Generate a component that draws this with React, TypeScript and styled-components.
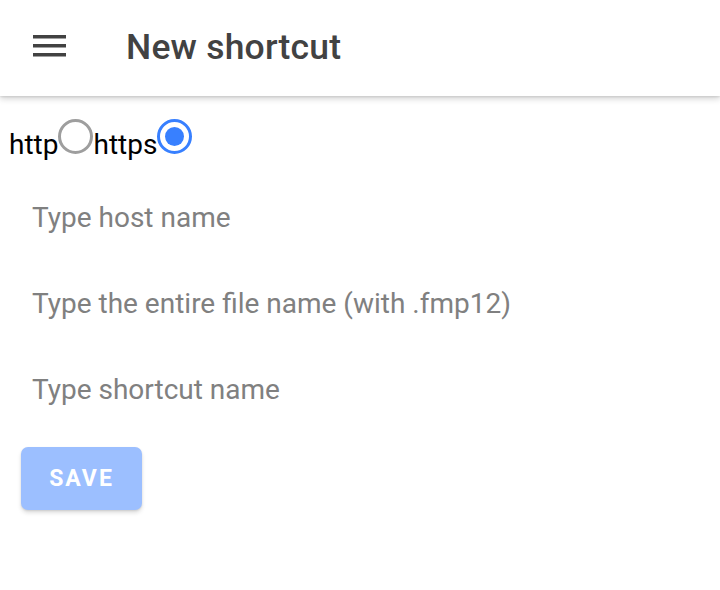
import React, { useState } from 'react'
import styled, { createGlobalStyle } from 'styled-components'

const GlobalStyle = createGlobalStyle`
  html, body {
    margin: 0;
    padding: 0;
    background: #ffffff;
    font-family: Roboto, "Liberation Sans", sans-serif;
  }
`

const Page = styled.div`
  display: flex;
  flex-direction: column;
  width: 720px;
  min-height: 590px;
  background: #fff;
`

const Header = styled.header`
  height: 96px;
  box-sizing: border-box;
  padding-bottom: 3px;
  display: flex;
  align-items: center;
  background: #fff;
  box-shadow: 0 3px 6px rgba(0, 0, 0, 0.16), 0 1px 2px rgba(0, 0, 0, 0.1);
  position: relative;
  z-index: 1;
`

const MenuButton = styled.button`
  border: 0;
  background: transparent;
  padding: 0;
  margin-left: 32px;
  width: 34px;
  height: 34px;
  display: flex;
  align-items: center;
  justify-content: center;
  color: #424242;
`

const Title = styled.h1`
  margin: 0 0 0 60px;
  font-size: 35.5px;
  font-weight: 500;
  color: #424242;
  letter-spacing: 0.2px;
`

const Content = styled.main`
  display: flex;
  flex-direction: column;
  padding-top: 31px;
`

const RadioRow = styled.div`
  display: flex;
  align-items: center;
  padding-left: 9px;
  height: 34px;
`

const RadioLabel = styled.label`
  display: flex;
  align-items: center;
  font-size: 28px;
  color: #000;
  cursor: pointer;
`

const RadioCircle = styled.span<{ $checked: boolean }>`
  box-sizing: border-box;
  width: 35px;
  height: 35px;
  border-radius: 50%;
  border: 3.5px solid ${(p) => (p.$checked ? '#3880ff' : '#9e9e9e')};
  display: flex;
  align-items: center;
  justify-content: center;
  margin-top: -16px;

  &::after {
    content: '';
    width: 19px;
    height: 19px;
    border-radius: 50%;
    background: #3880ff;
    display: ${(p) => (p.$checked ? 'block' : 'none')};
  }
`

const Fields = styled.div`
  display: flex;
  flex-direction: column;
  margin-top: 13px;
`

const Field = styled.input`
  border: 0;
  outline: 0;
  background: transparent;
  height: 86px;
  padding: 0 0 0 32px;
  font-family: Roboto, "Liberation Sans", sans-serif;
  font-size: 28px;
  color: #000;

  &::placeholder {
    color: #808080;
  }
`

const SaveButton = styled.button`
  margin: 15px 0 0 21px;
  width: 121px;
  height: 63px;
  border: 0;
  border-radius: 7px;
  background: #9cbfff;
  color: #fff;
  font-family: Roboto, "Liberation Sans", sans-serif;
  font-size: 23px;
  font-weight: 700;
  letter-spacing: 2px;
  box-shadow: 0 3px 4px rgba(0, 0, 0, 0.12), 0 1px 2px rgba(0, 0, 0, 0.1);
`

export default function App() {
  const [scheme, setScheme] = useState('https')

  return (
    <Page>
      <GlobalStyle />
      <Header>
        <MenuButton aria-label="menu">
          <svg width="33" height="24" viewBox="0 0 33 24">
            <rect x="0" y="0" width="33" height="3.5" fill="currentColor" />
            <rect x="0" y="9" width="33" height="3.5" fill="currentColor" />
            <rect x="0" y="18" width="33" height="3.5" fill="currentColor" />
          </svg>
        </MenuButton>
        <Title>New shortcut</Title>
      </Header>
      <Content>
        <RadioRow>
          {['http', 'https'].map((s) => (
            <RadioLabel key={s} onClick={() => setScheme(s)}>
              {s}
              <RadioCircle $checked={scheme === s} />
            </RadioLabel>
          ))}
        </RadioRow>
        <Fields>
          <Field placeholder="Type host name" />
          <Field placeholder="Type the entire file name (with .fmp12)" />
          <Field placeholder="Type shortcut name" />
        </Fields>
        <SaveButton disabled>SAVE</SaveButton>
      </Content>
    </Page>
  )
}
